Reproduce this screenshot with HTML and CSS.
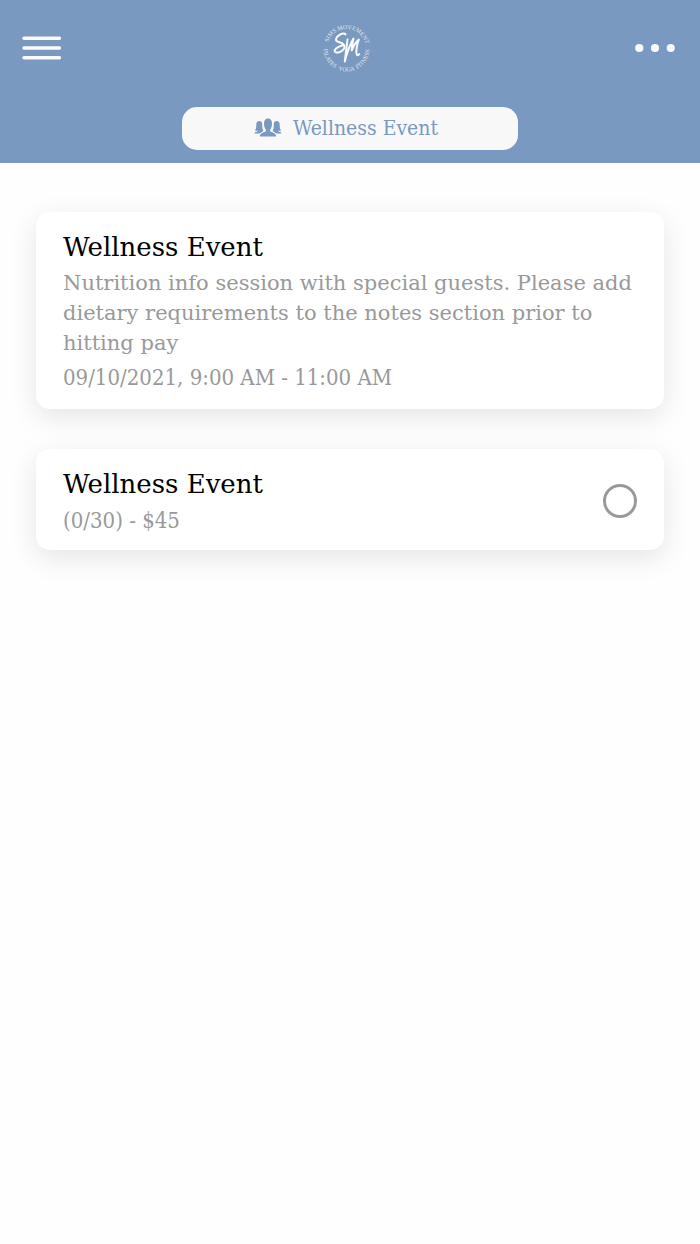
FILE: index.html
```html
<!DOCTYPE html>
<html lang="en">
<head>
<meta charset="utf-8">
<meta name="viewport" content="width=device-width, initial-scale=1">
<title>Wellness Event</title>
<link rel="stylesheet" href="styles.css">
</head>
<body>
<header class="header">
  <div class="toolbar">
    <button class="icon-button" type="button" aria-label="Menu">
      <svg width="40" height="24" viewBox="0 0 40 24" fill="none" stroke="currentColor" stroke-width="3.4" stroke-linecap="round"><path d="M2 2.300H37.500M2 12H37.500M2 21.700H37.500"/></svg>
    </button>
    <svg class="logo" width="52" height="52" viewBox="0 0 52 52" role="img" aria-label="Sims Movement Pilates Yoga Fitness">
      <defs>
        <path id="arc-top" d="M6 26.500A19.500 19.500 0 0 1 45 26.500"/>
        <path id="arc-bottom" d="M2.500 26.500A23 23 0 0 0 48.500 26.500"/>
      </defs>
      <g class="logo-text" text-anchor="middle">
        <text><textPath href="#arc-top" startOffset="22%">SIMS</textPath></text>
        <text><textPath href="#arc-top" startOffset="64%">MOVEMENT</textPath></text>
        <text><textPath href="#arc-bottom" startOffset="17%">PILATES</textPath></text>
        <text><textPath href="#arc-bottom" startOffset="50%">YOGA</textPath></text>
        <text><textPath href="#arc-bottom" startOffset="82%">FITNESS</textPath></text>
      </g>
      <g fill="none" stroke="currentColor" stroke-linecap="round" stroke-linejoin="round" stroke-width="2">
        <path d="M24.500 12.400C22.500 9.800 15 14 15 18C15 21 23.500 19.500 23.500 24.500C23.500 29 15 32.500 13.800 29.500C13.200 27 17.500 24.500 22.500 23"/>
        <path d="M26.500 17.500C25.700 25 24.600 32 23.800 39.500C26 31 28.500 23 32.500 16.500C31.500 21 30.700 25 30.800 28.500C32.500 24 34.500 20 37.800 17.500C36 23 35 28 35.500 31.500C36 34 37.300 33.500 38.300 32"/>
      </g>
    </svg>
    <button class="icon-button icon-button-more" type="button" aria-label="More options">
      <svg width="40" height="10" viewBox="0 0 40 10" fill="currentColor"><circle cx="4.300" cy="5" r="4.100"/><circle cx="20" cy="5" r="4.100"/><circle cx="35.700" cy="5" r="4.100"/></svg>
    </button>
  </div>
  <button class="category" type="button">
    <svg width="28" height="20" viewBox="0 0 28 20" fill="currentColor" aria-hidden="true">
      <path d="M5.300 3C7.500 3 8.300 4.600 8.200 7C8.100 9.400 8.600 11.400 9.400 12.900C8.500 13.500 7.500 14 6.700 14.700L5.500 15.600H0.500C0.600 14 2.200 13.900 3.800 13.200V12.700H1C1.800 11.400 2.300 9.400 2.300 7C2.300 4.600 3.100 3 5.300 3Z"/>
      <path d="M22.700 3C20.500 3 19.700 4.600 19.800 7C19.900 9.400 19.400 11.400 18.600 12.900C19.500 13.500 20.500 14 21.300 14.700L22.500 15.600H27.500C27.400 14 25.800 13.900 24.200 13.200V12.700H27C26.200 11.400 25.700 9.400 25.700 7C25.700 4.600 24.900 3 22.700 3Z"/>
      <path d="M14 .5C16.800 .5 18 2.500 18 5.500C18 8.200 17.300 10.300 16.200 11.500V13.200C17.500 14.400 22 14.500 22.300 18.500H5.700C6 14.500 10.500 14.400 11.800 13.200V11.500C10.700 10.300 10 8.200 10 5.500C10 2.500 11.200 .5 14 .5Z"/>
    </svg>
    <span>Wellness Event</span>
  </button>
</header>
<main class="content">
  <section class="card">
    <h1 class="title">Wellness Event</h1>
    <p class="description">Nutrition info session with special guests. Please add dietary requirements to the notes section prior to hitting pay</p>
    <p class="time">09/10/2021, 9:00 AM - 11:00 AM</p>
  </section>
  <label class="card option" for="ticket">
    <span class="option-text">
      <span class="title">Wellness Event</span>
      <span class="price">(0/30) - $45</span>
    </span>
    <input class="radio" type="radio" id="ticket" name="ticket">
  </label>
</main>
</body>
</html>
```
FILE: styles.css
```css
* {
  box-sizing: border-box;
}

body {
  margin: 0;
  background: #fefefe;
  color: #000;
  font-family: "DejaVu Serif", serif;
}

.header {
  display: flex;
  flex-direction: column;
  align-items: center;
  gap: 12px;
  padding-bottom: 13px;
  background: #7a99c0;
  color: #fafafa;
}

.toolbar {
  display: flex;
  align-items: center;
  justify-content: space-between;
  width: 100%;
  height: 95px;
  padding: 0 25px 0 22px;
}

.icon-button {
  display: flex;
  padding: 0;
  border: 0;
  background: none;
  color: inherit;
}

.icon-button-more {
  padding-left: 4px;
}

.logo-text {
  fill: currentColor;
  font-family: "Liberation Serif", serif;
  font-size: 6px;
  opacity: 0.8;
}

.category {
  display: flex;
  align-items: center;
  justify-content: center;
  gap: 11px;
  width: 48%;
  height: 43px;
  padding: 0 8px 2px 0;
  border: 0;
  border-radius: 15px;
  background: #f8f8f8;
  color: #7a99c0;
  font-family: "DejaVu Serif Condensed", "DejaVu Serif", serif;
  font-size: 21px;
}

.content {
  display: flex;
  flex-direction: column;
  gap: 40px;
  padding: 49px 36px;
}

.card {
  padding: 16px 24px 16px 27px;
  border-radius: 14px;
  background: #fff;
  box-shadow: 0 8px 28px rgba(0, 0, 0, 0.1);
}

.title {
  margin: 0;
  font-size: 26px;
  font-weight: 400;
  line-height: 38px;
}

.description {
  margin: 2px 0 4px;
  color: #999;
  font-size: 21px;
  line-height: 30px;
}

.time,
.price {
  margin: 0;
  color: #999;
  font-family: "DejaVu Serif Condensed", "DejaVu Serif", serif;
  font-size: 22px;
  line-height: 31px;
}

.option {
  display: flex;
  align-items: center;
  justify-content: space-between;
  padding-right: 27px;
  padding-bottom: 14px;
}

.option-text {
  display: flex;
  flex-direction: column;
  gap: 2px;
}

.radio {
  appearance: none;
  width: 34px;
  height: 34px;
  margin: 0;
  border: 3px solid #999;
  border-radius: 50%;
}

.radio:checked {
  background: #7a99c0;
}
```
